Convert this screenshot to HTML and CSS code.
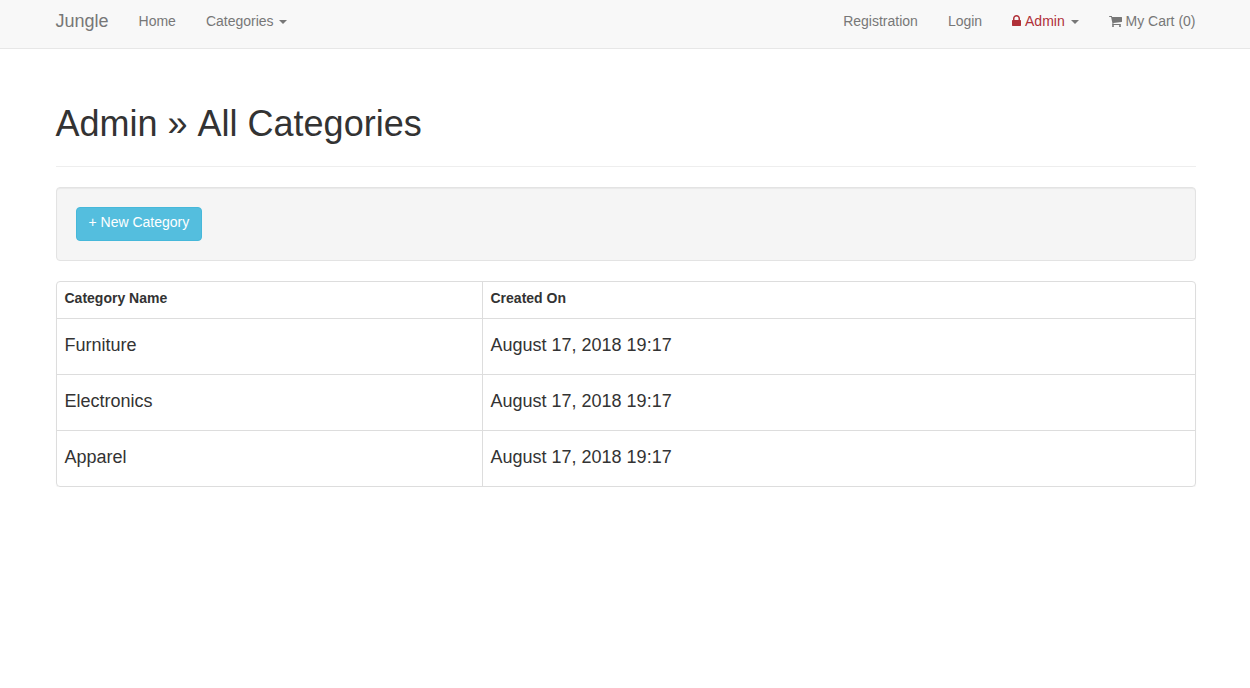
FILE: index.html
```html
<!DOCTYPE html>
<html lang="en">
<head>
<meta charset="utf-8">
<title>Jungle</title>
<link rel="stylesheet" href="styles.css">
</head>
<body>
<nav class="navbar">
  <div class="container navbar-inner">
    <a class="brand">Jungle</a>
    <ul class="nav">
      <li><a>Home</a></li>
      <li><a>Categories <span class="caret caret-near"></span></a></li>
    </ul>
    <ul class="nav nav-right">
      <li><a>Registration</a></li>
      <li><a>Login</a></li>
      <li><a><span class="admin"><svg class="icon lock" viewBox="0 0 1152 1792"><path transform="matrix(1 0 0 -1 0 1536)" d="M320 768h512v192q0 106-75 181t-181 75t-181-75t-75-181v-192zM1152 672v-576q0-40-28-68t-68-28h-960q-40 0-68 28t-28 68v576q0 40 28 68t68 28h32v192q0 184 132 316t316 132t316-132t132-316v-192h32q40 0 68-28t28-68z"/></svg> Admin</span> <span class="caret"></span></a></li>
      <li><a><svg class="icon cart" viewBox="0 0 1664 1792"><path transform="matrix(1 0 0 -1 0 1536)" d="M640 0q0-52-38-90t-90-38t-90 38t-38 90t38 90t90 38t90-38t38-90zM1536 0q0-52-38-90t-90-38t-90 38t-38 90t38 90t90 38t90-38t38-90zM1664 1088v-512q0-24-16.500-42.500t-40.500-21.500l-1044-122q13-60 13-70q0-16-24-64h920q26 0 45-19t19-45t-19-45t-45-19h-1024q-26 0-45 19t-19 45q0 11 8 31.500t16 36t21.500 40t15.500 29.500l-177 823h-204q-26 0-45 19t-19 45t19 45t45 19h256q16 0 28.500-6.500t19.500-15.500t13-24.500t8-26t5.500-29.500t4.500-26h1201q26 0 45-19t19-45z"/></svg> My Cart (0)</a></li>
    </ul>
  </div>
</nav>
<main class="container">
  <header class="page-header"><h1>Admin » All Categories</h1></header>
  <div class="well"><a class="btn">+ New Category</a></div>
  <div class="panel">
    <table class="table">
      <thead><tr><th class="name">Category Name</th><th>Created On</th></tr></thead>
      <tbody>
        <tr><td>Furniture</td><td>August 17, 2018 19:17</td></tr>
        <tr><td>Electronics</td><td>August 17, 2018 19:17</td></tr>
        <tr><td>Apparel</td><td>August 17, 2018 19:17</td></tr>
      </tbody>
    </table>
  </div>
</main>
</body>
</html>
```
FILE: styles.css
```css
* { box-sizing: border-box; }
body {
  margin: 0;
  font: 14px/20px "Liberation Sans", Arial, sans-serif;
  color: #333;
  background: #fff;
}
.container { width: 1140px; margin-left: 55.5px; }
.navbar {
  height: 49px;
  background: #f8f8f8;
  border-bottom: 1px solid #e7e7e7;
}
.navbar-inner { display: flex; color: #777; font-kerning: none; }
.brand { font-size: 18px; padding: 11px 15px 0 0; }
.nav { display: flex; list-style: none; margin: 0; padding: 0; }
.nav a { display: block; padding: 11px 15px; white-space: nowrap; }
.nav-right { margin-left: auto; margin-right: -15px; }
.admin { color: #b03038; }
.caret {
  display: inline-block;
  margin-left: 2px;
  vertical-align: middle;
  border-top: 4px solid;
  border-left: 4px solid transparent;
  border-right: 4px solid transparent;
}
.caret-near { margin-left: 1.4px; }
.icon { height: 14px; fill: currentColor; vertical-align: -2px; }
.lock { width: 9px; }
.cart { width: 13px; }
.page-header {
  margin: 54px 0 20px;
  padding-bottom: 21px;
  border-bottom: 1px solid #eee;
}
h1 { margin: 0; font-size: 36px; font-weight: 400; line-height: 42px; font-kerning: none; }
.well {
  height: 74px;
  margin-bottom: 20px;
  padding: 19px;
  background: #f5f5f5;
  border: 1px solid #e3e3e3;
  border-radius: 4px;
  box-shadow: inset 0 1px 1px rgba(0, 0, 0, .05);
}
.btn {
  display: inline-block;
  height: 34px;
  padding: 4px 12px;
  color: #fff;
  background: #54bede;
  border: 1px solid #46b8da;
  border-radius: 4px;
}
.panel {
  border: 1px solid #ddd;
  border-radius: 4px;
  box-shadow: 0 1px 1px rgba(0, 0, 0, .05);
}
.table { width: 100%; border-collapse: separate; border-spacing: 0; }
.table th { height: 36px; padding: 6px 8px 10px; text-align: left; }
.table td {
  height: 56px;
  padding: 16px 8px 19px;
  font-size: 18px;
  border-top: 1px solid #ddd;
}
.table tr > :first-child { border-right: 1px solid #ddd; }
.table .name { width: 426px; }
```
